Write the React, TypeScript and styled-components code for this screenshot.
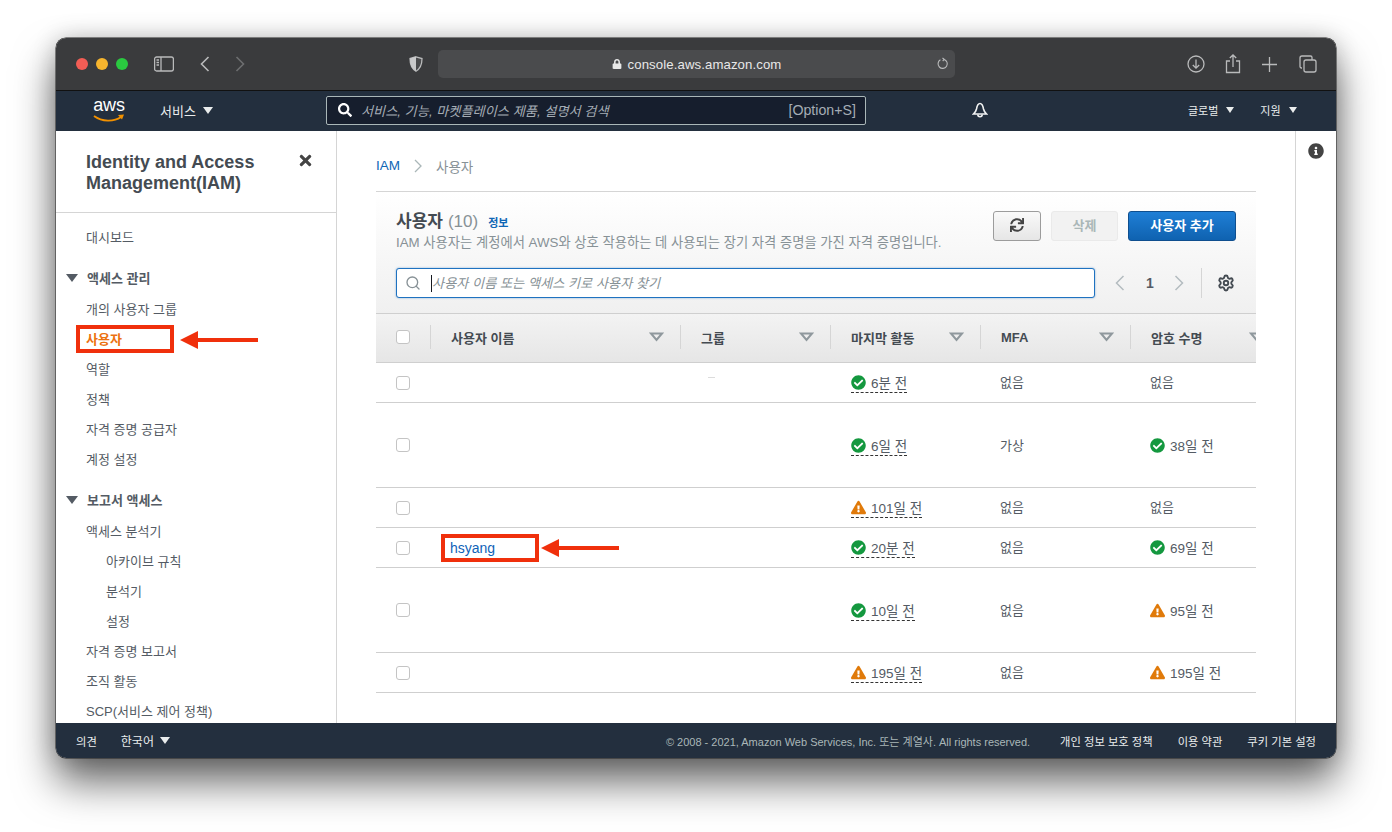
import React from 'react';
import styled, { createGlobalStyle } from 'styled-components';
import { FaCheckCircle, FaExclamationTriangle, FaInfoCircle, FaLock, FaSearch, FaSync, FaTimes } from 'react-icons/fa';
import { Search, Settings } from 'lucide-react';

const FONT = `"Liberation Sans", "Noto Sans CJK KR", sans-serif`;

const GlobalStyle = createGlobalStyle`
  html, body { margin: 0; padding: 0; background: #fff; }
  * { box-sizing: border-box; }
  body { font-family: ${FONT}; overflow: hidden; }
`;

// ---- window + browser chrome ----

const Stage = styled.div`
  width: 1392px;
  height: 832px;
  padding: 38px 56px 74px;
`;

const Window = styled.div`
  width: 1280px;
  height: 720px;
  border-radius: 10px;
  overflow: hidden;
  display: flex;
  flex-direction: column;
  box-shadow: 0 0 0 0.5px #222, 0 24px 42px rgba(0, 0, 0, 0.6), 0 0 24px rgba(0, 0, 0, 0.2);
`;

const TitleBar = styled.div`
  height: 53px;
  flex: none;
  background: #3a3b3d;
  border-bottom: 1px solid #111;
  display: flex;
  align-items: center;
  padding-left: 20px;
  color: #b9babb;
`;

const Light = styled.span<{ $color: string }>`
  width: 12px;
  height: 12px;
  border-radius: 50%;
  margin-right: 8px;
  background: ${({ $color }) => $color};
`;

const ChromeIcon = styled.svg<{ $left: number; $dim?: boolean; $heavy?: boolean }>`
  flex: none;
  margin-left: ${({ $left }) => $left}px;
  fill: none;
  stroke: currentColor;
  stroke-width: ${({ $heavy }) => ($heavy ? 1.6 : 1.3)};
  opacity: ${({ $dim }) => ($dim ? 0.4 : 1)};
`;

const UrlBar = styled.div`
  width: 517px;
  height: 28px;
  margin-left: 15px;
  border-radius: 5px;
  background: #4a4b4d;
  position: relative;
  display: flex;
  align-items: center;
  justify-content: center;
  gap: 6px;
  color: #e8e8e8;
  font-size: 13.2px;
  letter-spacing: 0.1px;
`;

const Reload = styled.svg`
  position: absolute;
  right: 5px;
  top: 7px;
  fill: none;
  stroke: #b9babb;
  stroke-width: 1.1;
`;

// ---- console nav ----

const TopNav = styled.div`
  height: 40px;
  flex: none;
  background: #232f3e;
  display: flex;
  align-items: center;
  padding-bottom: 2px;
  color: #fff;
`;

const Logo = styled.div`
  width: 32px;
  margin-left: 37px;
  height: 30px;
  position: relative;
  color: #fff;
  font-size: 18px;
  line-height: 21px;
  text-align: center;
  letter-spacing: -0.2px;
`;

const Smile = styled.svg`
  position: absolute;
  left: 0;
  top: 19px;
`;

const NavMenu = styled.span<{ $left: number; $size: number; $gap: number }>`
  margin-left: ${({ $left }) => $left}px;
  display: inline-flex;
  align-items: center;
  gap: ${({ $gap }) => $gap}px;
  font-size: ${({ $size }) => $size}px;
  color: #eaeded;
  white-space: nowrap;
`;

const Caret = styled.i<{ $size?: number }>`
  display: inline-block;
  width: 0;
  height: 0;
  border-left: ${({ $size = 5 }) => $size}px solid transparent;
  border-right: ${({ $size = 5 }) => $size}px solid transparent;
  border-top: ${({ $size = 5 }) => $size + 2}px solid currentColor;
`;

const NavSearch = styled.div`
  width: 540px;
  height: 29px;
  margin-left: 113px;
  border: 1px solid #aab7b8;
  border-radius: 2px;
  background: #161e2d;
  display: flex;
  align-items: center;
  padding: 0 9px 0 11px;
  color: #fff;
`;

const NavSearchText = styled.span`
  flex: 1;
  margin-left: 9px;
  font-size: 13.2px;
  font-style: italic;
  color: #a5adb5;
`;

const Shortcut = styled.span`
  font-size: 14.2px;
  color: #a5adb5;
`;

const Bell = styled.svg`
  margin-left: 106px;
  fill: none;
  stroke: #f2f3f3;
  stroke-width: 1.6;
  flex: none;
`;

// ---- body ----

const Body = styled.div`
  flex: 1;
  min-height: 0;
  display: flex;
  background: #fff;
`;

const Sidebar = styled.aside`
  width: 281px;
  flex: none;
  border-right: 1px solid #d5d5d5;
  overflow: hidden;
`;

const SideHead = styled.div`
  height: 82px;
  padding: 21px 22px 0 30px;
  border-bottom: 1px solid #d5d5d5;
  display: flex;
  justify-content: space-between;
  color: #444;
`;

const SideTitle = styled.h2`
  margin: 0;
  font-size: 18px;
  line-height: 21px;
  font-weight: 700;
  color: #444b52;
`;

const SideList = styled.nav`
  padding-top: 10px;
`;

const SideItem = styled.div<{ $depth?: number; $active?: boolean }>`
  height: 30px;
  line-height: 30px;
  padding-left: ${({ $depth = 0 }) => 30 + $depth * 20}px;
  font-size: 13px;
  white-space: nowrap;
  position: relative;
  color: ${({ $active }) => ($active ? '#ec7211' : '#545b64')};
  font-weight: ${({ $active }) => ($active ? 700 : 400)};
`;

const SideSection = styled.div`
  height: 35px;
  margin-top: 7px;
  display: flex;
  align-items: center;
  gap: 9px;
  padding-left: 10px;
  font-size: 13px;
  font-weight: 700;
  color: #545b64;
`;

// annotations drawn over the screenshot
const RedBox = styled.span<{ $left: number; $top: number; $w: number; $h: number }>`
  position: absolute;
  left: ${({ $left }) => $left}px;
  top: ${({ $top }) => $top}px;
  width: ${({ $w }) => $w}px;
  height: ${({ $h }) => $h}px;
  border: 4px solid #f0300c;
`;

const RedArrow = styled.svg<{ $left: number; $top: number }>`
  position: absolute;
  left: ${({ $left }) => $left}px;
  top: ${({ $top }) => $top}px;
`;

const Main = styled.main`
  flex: 1;
  min-width: 0;
  padding: 0 39px 0 39px;
`;

const Rail = styled.div`
  width: 41px;
  flex: none;
  border-left: 1px solid #d5d5d5;
  display: flex;
  justify-content: center;
  padding-top: 12px;
  color: #444;
  font-size: 16px;
`;

const Crumbs = styled.div`
  height: 61px;
  border-bottom: 1px solid #d5d5d5;
  display: flex;
  align-items: center;
  font-size: 13.5px;
  color: #879196;
  padding-top: 9px;
`;

const CrumbLink = styled.a`
  color: #0f66b5;
`;

const CrumbSep = styled.svg`
  margin: 0 14px;
  fill: none;
  stroke: #aab7b8;
  stroke-width: 1.3;
`;

const PanelHead = styled.div`
  height: 122px;
  padding: 19px 20px 0;
  background: linear-gradient(#fff, #f0f0f0);
  border-bottom: 1px solid #cfcfcf;
`;

const HeadRow = styled.div`
  display: flex;
  justify-content: space-between;
  height: 57px;
`;

const Title = styled.h1`
  margin: 0;
  font-size: 17px;
  line-height: 21px;
  font-weight: 700;
  color: #444b52;
  display: flex;
  align-items: baseline;
`;

const Count = styled.span`
  font-weight: 400;
  color: #879196;
  margin-left: 5px;
`;

const InfoLink = styled.a`
  font-size: 11px;
  font-weight: 700;
  color: #0f66b5;
  margin-left: 10px;
`;

const Subtitle = styled.p`
  margin: 1px 0 0;
  font-size: 13.3px;
  line-height: 16px;
  color: #879196;
  white-space: nowrap;
`;

const Actions = styled.div`
  display: flex;
  gap: 10px;
  align-items: flex-start;
`;

const Button = styled.button<{ $kind?: 'primary' | 'disabled' }>`
  height: 30px;
  padding: 0 0 3px;
  border-radius: 3px;
  font-family: ${FONT};
  font-size: 13px;
  font-weight: 700;
  display: flex;
  align-items: center;
  justify-content: center;
  ${({ $kind }) =>
    $kind === 'primary'
      ? `width:108px;color:#fff;border:1px solid #0f4f8f;background:linear-gradient(#1f7fd6,#0f62b0);`
      : $kind === 'disabled'
      ? `width:67px;color:#aab7b8;border:1px solid #eaeaea;background:#f2f2f2;`
      : `width:48px;color:#444;border:1px solid #9c9c9c;background:linear-gradient(#f9f9f9,#e6e6e6);`}
`;

const FilterRow = styled.div`
  display: flex;
  align-items: center;
`;

const FilterBox = styled.div`
  width: 699px;
  height: 30px;
  background: #fff;
  border: 1px solid #1f72c0;
  border-radius: 3px;
  box-shadow: 0 0 2px rgba(31, 114, 192, 0.6);
  display: flex;
  align-items: center;
  padding-left: 8px;
  color: #879196;
`;

const TextCaret = styled.span`
  width: 1px;
  height: 17px;
  margin-left: 10px;
  background: #16191f;
`;

const FilterText = styled.span`
  font-size: 13.2px;
  font-style: italic;
  color: #879196;
  padding-bottom: 2px;
`;

const Pager = styled.div`
  display: flex;
  align-items: center;
  margin-left: 20px;
  color: #545b64;
  font-size: 14px;
  font-weight: 700;
`;

const PagerArrow = styled.svg<{ $before?: number; $after?: number }>`
  margin: 0 ${({ $after = 0 }) => $after}px 0 ${({ $before = 0 }) => $before}px;
  fill: none;
  stroke: #b4bcc0;
  stroke-width: 1.5;
`;

const PagerRule = styled.span`
  width: 1px;
  height: 30px;
  margin: 0 15px 0 17px;
  background: #d5d5d5;
`;

const TableClip = styled.div`
  overflow: hidden;
`;

const Row = styled.div<{ $h: number }>`
  display: grid;
  grid-template-columns: 54px 250px 150px 150px 150px 150px;
  width: 905px;
  height: ${({ $h }) => $h}px;
  align-items: center;
  font-size: 13px;
  color: #545b64;
  box-shadow: 0 1px 0 #cfcfcf;
  margin-bottom: 1px;
`;

const HeadGrid = styled(Row)`
  background: linear-gradient(#f3f3f3, #e6e6e6);
  margin-bottom: 0;
  padding-bottom: 2px;
  border-bottom: 1px solid #cfcfcf;
  box-shadow: none;
  font-weight: 700;
  color: #444b52;
`;

const HeadCell = styled.div`
  height: 24px;
  border-left: 1px solid #d5d5d5;
  padding: 0 16px 0 20px;
  display: flex;
  align-items: center;
  justify-content: space-between;
`;

const SortMark = styled.svg`
  fill: none;
  stroke: #8f989d;
  stroke-width: 2;
`;

const CheckCell = styled.div`
  padding-left: 20px;
  display: flex;
`;

const Check = styled.span`
  width: 14px;
  height: 14px;
  background: #fff;
  border: 1px solid #c4c4c4;
  border-radius: 3px;
`;

const NameCell = styled.div`
  padding-left: 20px;
  position: relative;
`;

const UserLink = styled.a`
  color: #0f62b8;
  font-size: 14px;
`;

const Speck = styled.span`
  display: block;
  width: 7px;
  height: 1px;
  margin: 0 0 10px 8px;
  background: #dcdcdc;
`;

const Cell = styled.div<{ $inset?: number }>`
  padding-left: ${({ $inset = 20 }) => $inset}px;
`;

const PlainValue = styled.span`
  display: block;
  padding-bottom: 2px;
`;

const Status = styled.span<{ $tone: 'ok' | 'warn'; $dashed?: boolean }>`
  display: inline-flex;
  align-items: center;
  gap: 5px;
  height: 21px;
  white-space: nowrap;
  font-size: 13.5px;
  color: #545b64;
  border-bottom: ${({ $dashed }) => ($dashed ? '1px dashed #333' : '1px solid transparent')};
  svg {
    color: ${({ $tone }) => ($tone === 'ok' ? '#14983f' : '#e07a0a')};
    font-size: 15px;
    margin-top: 1px;
  }
`;

// ---- footer ----

const Footer = styled.footer`
  height: 35px;
  flex: none;
  background: #232f3e;
  display: flex;
  align-items: center;
  padding: 0 20px;
  font-size: 11.3px;
  color: #eaeded;
`;

const FooterMenu = styled.span<{ $left?: number; $size?: number }>`
  display: inline-flex;
  align-items: center;
  gap: 6px;
  margin-left: ${({ $left = 0 }) => $left}px;
  font-size: ${({ $size = 11.3 }) => $size}px;
`;

const Copyright = styled.span`
  margin-left: auto;
  font-size: 11px;
  color: #aab7b8;
  margin-right: 30px;
`;

// ---- data ----

type Tone = 'ok' | 'warn';
interface UserRow {
  h: number;
  name?: string;
  active: [Tone, string];
  mfa: string;
  pw?: [Tone, string];
  speck?: boolean;
}

const rows: UserRow[] = [
  { h: 39, active: ['ok', '6분 전'], mfa: '없음', speck: true },
  { h: 84, active: ['ok', '6일 전'], mfa: '가상', pw: ['ok', '38일 전'] },
  { h: 39, active: ['warn', '101일 전'], mfa: '없음' },
  { h: 39, name: 'hsyang', active: ['ok', '20분 전'], mfa: '없음', pw: ['ok', '69일 전'] },
  { h: 84, active: ['ok', '10일 전'], mfa: '없음', pw: ['warn', '95일 전'] },
  { h: 39, active: ['warn', '195일 전'], mfa: '없음', pw: ['warn', '195일 전'] },
];

const headers = ['사용자 이름', '그룹', '마지막 활동', 'MFA', '암호 수명'];

const access = ['개의 사용자 그룹', '사용자', '역할', '정책', '자격 증명 공급자', '계정 설정'];

const Arrow: React.FC<{ left: number; top: number }> = ({ left, top }) => (
  <RedArrow $left={left} $top={top} width="78" height="20" viewBox="0 0 78 20">
    <path d="M0 10 18 1v7h60v4H18v7z" fill="#f0300c" />
  </RedArrow>
);

const StatusIcon: React.FC<{ tone: Tone }> = ({ tone }) =>
  tone === 'ok' ? <FaCheckCircle /> : <FaExclamationTriangle />;

export default function App() {
  return (
    <Stage>
      <GlobalStyle />
      <Window>
        <TitleBar>
          <Light $color="#f25d55" />
          <Light $color="#f7b52e" />
          <Light $color="#2ac940" />
          <ChromeIcon $left={18} width="20" height="16" viewBox="0 0 20 16">
            <rect x="0.6" y="1" width="18.8" height="14" rx="2" />
            <path d="M7 1v14M2.5 4h2.500M2.500 6.500h2.500M2.500 9h2.500" />
          </ChromeIcon>
          <ChromeIcon $left={26} $heavy width="10" height="16" viewBox="0 0 10 16">
            <path d="M8.500 1 1.500 8l7 7" />
          </ChromeIcon>
          <ChromeIcon $left={25} $dim $heavy width="10" height="16" viewBox="0 0 10 16">
            <path d="m1.500 1 7 7-7 7" />
          </ChromeIcon>
          <ChromeIcon $left={164} width="14" height="16" viewBox="0 0 14 16">
            <path d="M7 .8 13 2.600c0 6-1.400 10-6 12.600C2.400 12.600 1 8.600 1 2.600z" fill="#4a4b4d" />
            <path d="M7 .8 1 2.600c0 6 1.400 10 6 12.600z" fill="#c8c9ca" stroke="none" />
          </ChromeIcon>
          <UrlBar>
            <FaLock size={10} />
            console.aws.amazon.com
            <Reload width="14" height="14" viewBox="0 0 14 14">
              <path d="M8 2.400a4.600 4.600 0 1 1-3.600.4M6.500 1l1.700 1.400-1.500 1.600" />
            </Reload>
          </UrlBar>
          <ChromeIcon $left={232} width="18" height="18" viewBox="0 0 18 18">
            <circle cx="9" cy="9" r="8" />
            <path d="M9 4.500v8.500M5.800 10 9 13.200l3.200-3.200" />
          </ChromeIcon>
          <ChromeIcon $left={20} width="16" height="20" viewBox="0 0 16 20">
            <path d="M5 7H1.500v11.500h13V7H11M8 13V1M4.800 4 8 1l3.200 3" />
          </ChromeIcon>
          <ChromeIcon $left={21} width="15" height="15" viewBox="0 0 15 15">
            <path d="M7.500 0v15M0 7.500h15" />
          </ChromeIcon>
          <ChromeIcon $left={22} width="18" height="18" viewBox="0 0 18 18">
            <rect x="5" y="5" width="12" height="12" rx="2" />
            <path d="M3 13H2.500A1.500 1.500 0 0 1 1 11.500V3a2 2 0 0 1 2-2h8.500A1.500 1.500 0 0 1 13 2.500V5" />
          </ChromeIcon>
        </TitleBar>

        <TopNav>
          <Logo>
            aws
            <Smile width="32" height="10" viewBox="0 0 32 10">
              <path d="M1 2c8 6 20 6 27 1" fill="none" stroke="#f29100" strokeWidth="1.8" />
              <path d="m25 1 6-.5-2 5z" fill="#f29100" />
            </Smile>
          </Logo>
          <NavMenu $left={35} $size={13} $gap={7}>
            서비스 <Caret />
          </NavMenu>
          <NavSearch>
            <FaSearch size={14} />
            <NavSearchText>서비스, 기능, 마켓플레이스 제품, 설명서 검색</NavSearchText>
            <Shortcut>[Option+S]</Shortcut>
          </NavSearch>
          <Bell width="16" height="16" viewBox="0 0 16 16">
            <path d="M8 1.500C5.500 1.500 5 4 4.500 7 4 9.500 2.500 11 1.500 12h13c-1-1-2.500-2.500-3-5C11 4 10.500 1.500 8 1.500z" />
            <path d="M5.800 12.500a2.200 2.200 0 0 0 4.400 0" />
          </Bell>
          <NavMenu $left={200} $size={11} $gap={8}>
            글로벌 <Caret $size={4.5} />
          </NavMenu>
          <NavMenu $left={26} $size={11} $gap={8}>
            지원 <Caret $size={4.5} />
          </NavMenu>
        </TopNav>

        <Body>
          <Sidebar>
            <SideHead>
              <SideTitle>
                Identity and Access
                <br />
                Management(IAM)
              </SideTitle>
              <FaTimes size={17} />
            </SideHead>
            <SideList>
              <SideItem>대시보드</SideItem>
              <SideSection>
                <Caret $size={6} />
                액세스 관리
              </SideSection>
              {access.map((label) => {
                const on = label === '사용자';
                return (
                  <SideItem key={label} $active={on}>
                    {label}
                    {on && (
                      <>
                        <RedBox $left={20} $top={0} $w={98} $h={28} />
                        <Arrow left={124} top={5} />
                      </>
                    )}
                  </SideItem>
                );
              })}
              <SideSection>
                <Caret $size={6} />
                보고서 액세스
              </SideSection>
              <SideItem>액세스 분석기</SideItem>
              <SideItem $depth={1}>아카이브 규칙</SideItem>
              <SideItem $depth={1}>분석기</SideItem>
              <SideItem $depth={1}>설정</SideItem>
              <SideItem>자격 증명 보고서</SideItem>
              <SideItem>조직 활동</SideItem>
              <SideItem>SCP(서비스 제어 정책)</SideItem>
            </SideList>
          </Sidebar>

          <Main>
            <Crumbs>
              <CrumbLink>IAM</CrumbLink>
              <CrumbSep width="8" height="14" viewBox="0 0 8 14">
                <path d="m1 1 6 6-6 6" />
              </CrumbSep>
              사용자
            </Crumbs>

            <PanelHead>
              <HeadRow>
                <div>
                  <Title>
                    사용자<Count>(10)</Count>
                    <InfoLink>정보</InfoLink>
                  </Title>
                  <Subtitle>IAM 사용자는 계정에서 AWS와 상호 작용하는 데 사용되는 장기 자격 증명을 가진 자격 증명입니다.</Subtitle>
                </div>
                <Actions>
                  <Button>
                    <FaSync size={14} />
                  </Button>
                  <Button $kind="disabled">삭제</Button>
                  <Button $kind="primary">사용자 추가</Button>
                </Actions>
              </HeadRow>
              <FilterRow>
                <FilterBox>
                  <Search size={16} strokeWidth={2} />
                  <TextCaret />
                  <FilterText>사용자 이름 또는 액세스 키로 사용자 찾기</FilterText>
                </FilterBox>
                <Pager>
                  <PagerArrow $after={21} width="10" height="16" viewBox="0 0 10 16">
                    <path d="M8.500 1 1.500 8l7 7" />
                  </PagerArrow>
                  1
                  <PagerArrow $before={20} width="10" height="16" viewBox="0 0 10 16">
                    <path d="m1.500 1 7 7-7 7" />
                  </PagerArrow>
                  <PagerRule />
                  <Settings size={18} strokeWidth={2.5} color="#444b52" />
                </Pager>
              </FilterRow>
            </PanelHead>

            <TableClip>
              <HeadGrid $h={49}>
                <CheckCell>
                  <Check />
                </CheckCell>
                {headers.map((h) => (
                  <HeadCell key={h}>
                    {h}
                    <SortMark width="15" height="10" viewBox="0 0 15 10">
                      <path d="M2 1.500h11L7.500 8z" />
                    </SortMark>
                  </HeadCell>
                ))}
              </HeadGrid>
              {rows.map((r, i) => (
                <Row key={i} $h={r.h}>
                  <CheckCell>
                    <Check />
                  </CheckCell>
                  <NameCell>
                    {r.name && (
                      <>
                        <UserLink>{r.name}</UserLink>
                        <RedBox $left={11} $top={-6} $w={98} $h={28} />
                        <Arrow left={111} top={-2} />
                      </>
                    )}
                  </NameCell>
                  <Cell>{r.speck && <Speck />}</Cell>
                  <Cell $inset={21}>
                    <Status $tone={r.active[0]} $dashed>
                      <StatusIcon tone={r.active[0]} />
                      {r.active[1]}
                    </Status>
                  </Cell>
                  <Cell>
                    <PlainValue>{r.mfa}</PlainValue>
                  </Cell>
                  <Cell>
                    {r.pw ? (
                      <Status $tone={r.pw[0]}>
                        <StatusIcon tone={r.pw[0]} />
                        {r.pw[1]}
                      </Status>
                    ) : (
                      <PlainValue>없음</PlainValue>
                    )}
                  </Cell>
                </Row>
              ))}
            </TableClip>
          </Main>

          <Rail>
            <FaInfoCircle />
          </Rail>
        </Body>

        <Footer>
          <span>의견</span>
          <FooterMenu $left={24} $size={12}>
            한국어 <Caret />
          </FooterMenu>
          <Copyright>© 2008 - 2021, Amazon Web Services, Inc. 또는 계열사. All rights reserved.</Copyright>
          <span>개인 정보 보호 정책</span>
          <FooterMenu $left={25}>이용 약관</FooterMenu>
          <FooterMenu $left={25}>쿠키 기본 설정</FooterMenu>
        </Footer>
      </Window>
    </Stage>
  );
}
